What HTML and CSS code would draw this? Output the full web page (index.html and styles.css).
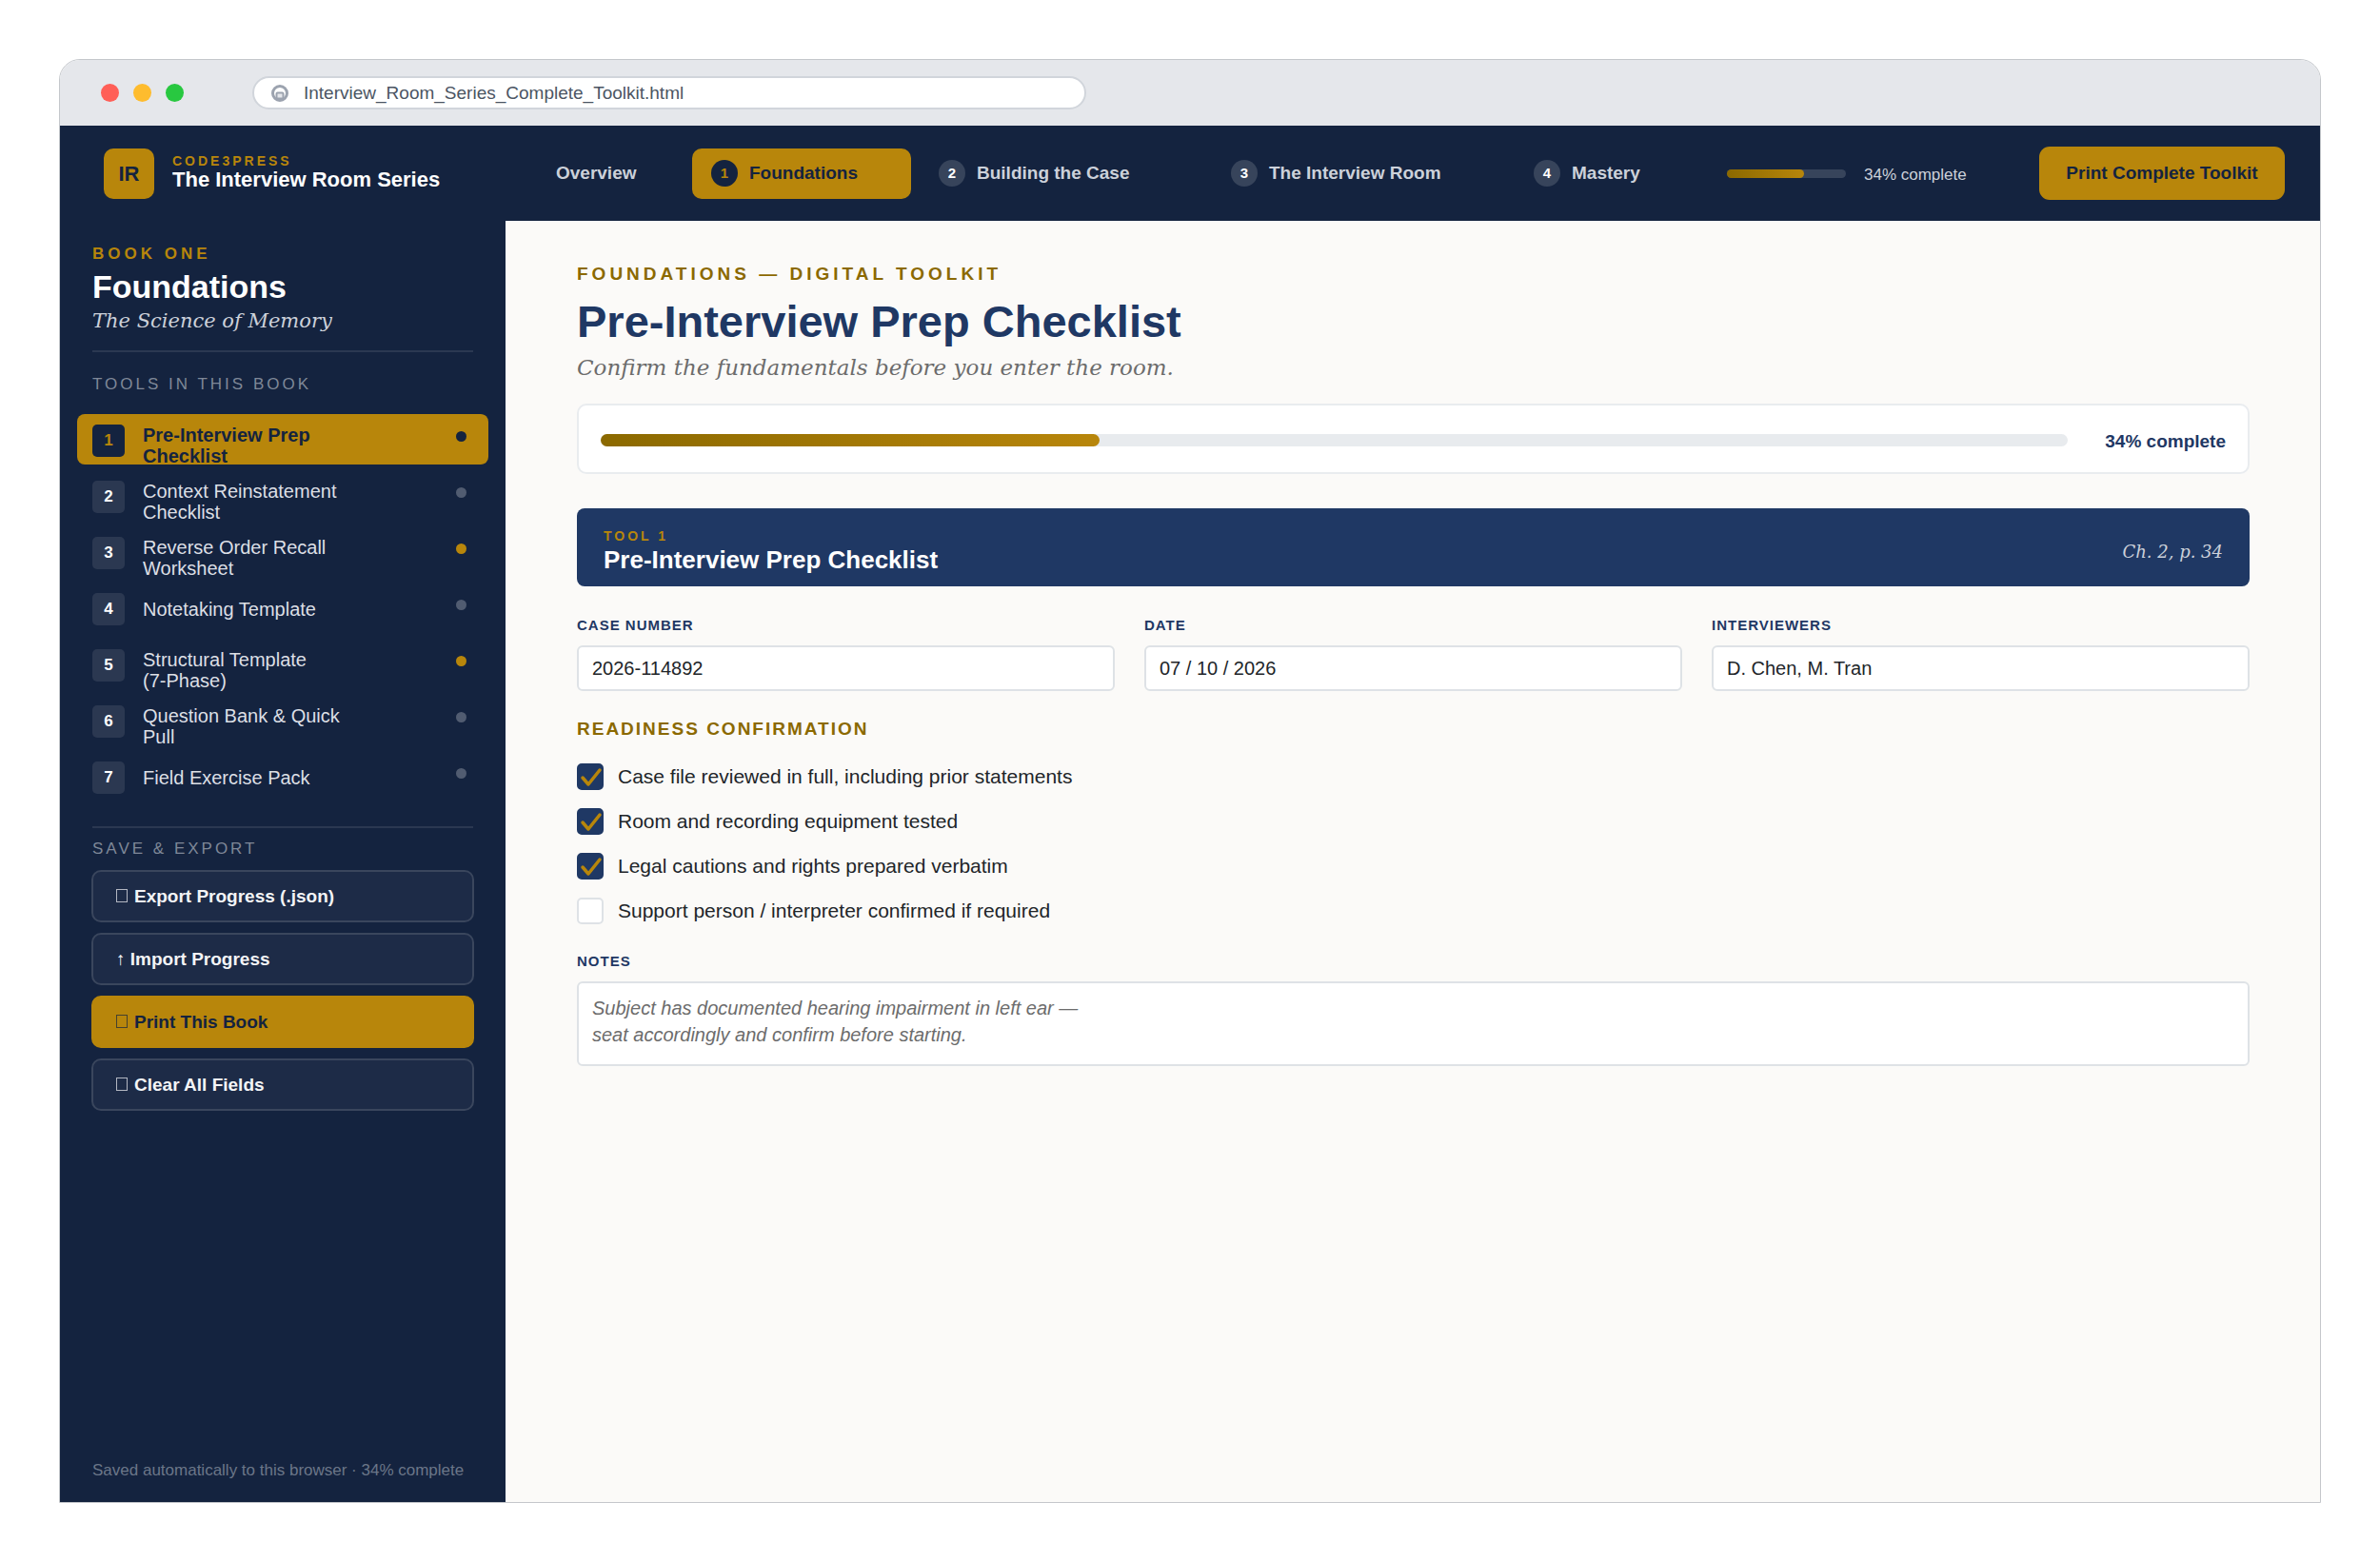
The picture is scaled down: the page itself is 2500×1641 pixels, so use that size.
FILE: index.html
```html
<!DOCTYPE html>
<html lang="en">
<head>
  <meta charset="UTF-8">
  <meta name="viewport" content="width=device-width, initial-scale=1.0">
  <title>The Interview Room Series</title>
  <link rel="stylesheet" href="styles.css">
</head>
<body>
  <div class="window">
    <div class="chrome">
      <span class="light light-red"></span>
      <span class="light light-yellow"></span>
      <span class="light light-green"></span>
      <div class="address">
        <svg class="address-icon" viewBox="0 0 20 20" fill="none" stroke="#9ca3af">
          <circle cx="10" cy="10" r="7.500" stroke-width="3"/>
          <rect x="6.500" y="9.500" width="7" height="6" rx="1" stroke-width="2" fill="#e5e7eb"/>
        </svg>
        <span>Interview_Room_Series_Complete_Toolkit.html</span>
      </div>
    </div>

    <header class="topbar">
      <div class="logo">IR</div>
      <div class="brand">
        <div class="brand-press">CODE3PRESS</div>
        <div class="brand-name">The Interview Room Series</div>
      </div>
      <nav class="books">
        <a href="#" class="book book-overview">Overview</a>
        <a href="#" class="book book-one active"><span class="book-num">1</span>Foundations</a>
        <a href="#" class="book book-two"><span class="book-num">2</span>Building the Case</a>
        <a href="#" class="book book-three"><span class="book-num">3</span>The Interview Room</a>
        <a href="#" class="book book-four"><span class="book-num">4</span>Mastery</a>
      </nav>
      <div class="mini-track"><div class="mini-fill"></div></div>
      <span class="mini-label">34% complete</span>
      <button type="button" class="print-all">Print Complete Toolkit</button>
    </header>

    <div class="layout">
      <aside class="sidebar">
        <div class="side-eyebrow">BOOK ONE</div>
        <h2 class="side-title">Foundations</h2>
        <p class="side-subtitle">The Science of Memory</p>
        <hr class="divider">
        <h3 class="side-heading">TOOLS IN THIS BOOK</h3>
        <ul class="tools">
          <li><a href="#" class="tool active"><span class="tool-num">1</span><span class="tool-name">Pre-Interview Prep<br>Checklist</span><span class="dot"></span></a></li>
          <li><a href="#" class="tool"><span class="tool-num">2</span><span class="tool-name">Context Reinstatement<br>Checklist</span><span class="dot"></span></a></li>
          <li><a href="#" class="tool"><span class="tool-num">3</span><span class="tool-name">Reverse Order Recall<br>Worksheet</span><span class="dot started"></span></a></li>
          <li><a href="#" class="tool"><span class="tool-num">4</span><span class="tool-name">Notetaking Template</span><span class="dot"></span></a></li>
          <li><a href="#" class="tool"><span class="tool-num">5</span><span class="tool-name">Structural Template<br>(7-Phase)</span><span class="dot started"></span></a></li>
          <li><a href="#" class="tool"><span class="tool-num">6</span><span class="tool-name">Question Bank &amp; Quick<br>Pull</span><span class="dot"></span></a></li>
          <li><a href="#" class="tool"><span class="tool-num">7</span><span class="tool-name">Field Exercise Pack</span><span class="dot"></span></a></li>
        </ul>
        <hr class="divider">
        <h3 class="side-heading side-heading-export">SAVE &amp; EXPORT</h3>
        <div class="actions">
          <button type="button" class="action"><span class="box-icon"></span>Export Progress (.json)</button>
          <button type="button" class="action"><span class="arrow-icon">↑</span> Import Progress</button>
          <button type="button" class="action action-primary"><span class="box-icon"></span>Print This Book</button>
          <button type="button" class="action"><span class="box-icon"></span>Clear All Fields</button>
        </div>
        <p class="saved">Saved automatically to this browser · 34% complete</p>
      </aside>

      <main class="content">
        <div class="eyebrow">FOUNDATIONS — DIGITAL TOOLKIT</div>
        <h1 class="title">Pre-Interview Prep Checklist</h1>
        <p class="subtitle">Confirm the fundamentals before you enter the room.</p>

        <div class="progress-card">
          <div class="track"><div class="fill"></div></div>
          <span class="progress-label">34% complete</span>
        </div>

        <div class="tool-header">
          <div>
            <div class="tool-header-num">TOOL 1</div>
            <h2 class="tool-header-title">Pre-Interview Prep Checklist</h2>
          </div>
          <span class="tool-ref">Ch. 2, p. 34</span>
        </div>

        <form>
          <div class="fields">
            <div class="field">
              <label for="case-number">CASE NUMBER</label>
              <input type="text" id="case-number" value="2026-114892">
            </div>
            <div class="field">
              <label for="date">DATE</label>
              <input type="text" id="date" value="07 / 10 / 2026">
            </div>
            <div class="field">
              <label for="interviewers">INTERVIEWERS</label>
              <input type="text" id="interviewers" value="D. Chen, M. Tran">
            </div>
          </div>

          <h3 class="section-heading">READINESS CONFIRMATION</h3>
          <div class="checks">
            <label class="check"><input type="checkbox" checked>Case file reviewed in full, including prior statements</label>
            <label class="check"><input type="checkbox" checked>Room and recording equipment tested</label>
            <label class="check"><input type="checkbox" checked>Legal cautions and rights prepared verbatim</label>
            <label class="check"><input type="checkbox">Support person / interpreter confirmed if required</label>
          </div>

          <div class="field">
            <label for="notes">NOTES</label>
            <textarea id="notes">Subject has documented hearing impairment in left ear —
seat accordingly and confirm before starting.</textarea>
          </div>
        </form>
      </main>
    </div>
  </div>
</body>
</html>
```
FILE: styles.css
```css
* {
  margin: 0;
  padding: 0;
  box-sizing: border-box;
}
:root {
  --navy: #1f3864;
  --navy-dark: #14233f;
  --gold: #b8860b;
  --gold-dark: #8b6900;
}
body {
  padding: 62px;
  background: #fff;
  font-family: "Liberation Sans", Arial, sans-serif;
  font-size: 20px;
  color: #212529;
}
a {
  color: inherit;
  text-decoration: none;
}
button, input, textarea {
  font-family: inherit;
}

/* Browser window */
.window {
  display: flex;
  flex-direction: column;
  min-height: calc(100vh - 124px);
  border: 1px solid #c4c7cb;
  border-radius: 22px 22px 0 0;
  overflow: hidden;
}
.chrome {
  display: flex;
  align-items: center;
  gap: 15px;
  height: 69px;
  padding-left: 43px;
  background: #e5e7eb;
}
.light {
  width: 19px;
  height: 19px;
  border-radius: 50%;
}
.light-red { background: #ff5f57; }
.light-yellow { background: #febc2e; }
.light-green { background: #28c840; }
.address {
  display: flex;
  align-items: center;
  gap: 15px;
  width: 876px;
  height: 35px;
  margin-left: 57px;
  padding-left: 17px;
  border: 2px solid #d1d5db;
  border-radius: 18px;
  background: #fff;
  font-size: 19px;
  color: #4b5563;
}
.address-icon {
  width: 20px;
  height: 20px;
}

/* Top bar */
.topbar {
  display: flex;
  align-items: center;
  height: 100px;
  padding: 0 37px 0 46px;
  background: var(--navy-dark);
  color: #fff;
  white-space: nowrap;
}
.logo {
  width: 53px;
  height: 53px;
  border-radius: 10px;
  background: var(--gold);
  color: var(--navy-dark);
  font-size: 22px;
  font-weight: bold;
  line-height: 53px;
  text-align: center;
}
.brand {
  width: 383px;
  margin-left: 19px;
  padding-bottom: 2px;
  font-weight: bold;
}
.brand-press {
  font-size: 14px;
  line-height: 16px;
  letter-spacing: 3px;
  color: var(--gold);
}
.brand-name {
  font-size: 22px;
  line-height: 24px;
}
.books {
  display: flex;
  gap: 9px;
}
.book {
  display: flex;
  align-items: center;
  gap: 12px;
  height: 53px;
  padding-left: 20px;
  border-radius: 10px;
  font-size: 19px;
  font-weight: bold;
  color: #ccd1da;
}
.book-overview { width: 154px; }
.book-one { width: 230px; }
.book-two { width: 298px; }
.book-three { width: 309px; }
.book-four { width: 223px; }
.book-num {
  width: 28px;
  height: 28px;
  border-radius: 50%;
  background: #37445b;
  color: #fff;
  font-size: 15px;
  line-height: 28px;
  text-align: center;
}
.book.active {
  background: var(--gold);
  color: var(--navy-dark);
}
.book.active .book-num {
  background: var(--navy-dark);
  color: var(--gold);
}
.mini-track {
  width: 125px;
  height: 9px;
  border-radius: 5px;
  background: #37445b;
}
.mini-fill {
  width: 65%;
  height: 100%;
  border-radius: 5px;
  background: linear-gradient(90deg, var(--gold-dark), var(--gold));
}
.mini-label {
  margin-left: 19px;
  padding-top: 3px;
  font-size: 17px;
  color: #ccd1da;
}
.print-all {
  width: 258px;
  height: 56px;
  margin-left: auto;
  border: none;
  border-radius: 11px;
  background: var(--gold);
  color: var(--navy-dark);
  font-size: 19px;
  font-weight: bold;
}

/* Sidebar */
.layout {
  display: flex;
  flex: 1;
}
.sidebar {
  display: flex;
  flex-direction: column;
  width: 468px;
  padding: 25px 34px 23px;
  background: var(--navy-dark);
  color: #fff;
}
.side-eyebrow {
  font-size: 17px;
  font-weight: bold;
  line-height: 20px;
  letter-spacing: 4px;
  color: var(--gold);
}
.side-title {
  margin-top: 4px;
  font-size: 34px;
  line-height: 40px;
}
.side-subtitle {
  margin-top: 2px;
  font-family: "DejaVu Serif", serif;
  font-size: 21px;
  font-style: italic;
  line-height: 28px;
  color: #ccd1da;
}
.divider {
  height: 2px;
  margin-top: 17px;
  border: none;
  background: #2b3851;
}
.side-heading {
  margin-top: 24px;
  font-size: 17px;
  font-weight: normal;
  line-height: 20px;
  letter-spacing: 3px;
  color: #7f8898;
}
.side-heading-export {
  margin-top: 12px;
}
.tools {
  display: grid;
  grid-auto-rows: 53px;
  gap: 6px;
  margin: 21px -16px 9px;
  list-style: none;
}
.tool {
  display: flex;
  align-items: flex-start;
  height: 53px;
  padding: 11px 23px 0 16px;
  border-radius: 8px;
  color: #dcdfe5;
}
.tool-num {
  width: 34px;
  height: 34px;
  border-radius: 5px;
  background: #2b3851;
  color: #fff;
  font-size: 17px;
  font-weight: bold;
  line-height: 34px;
  text-align: center;
}
.tool-name {
  display: flex;
  flex: 1;
  flex-direction: column;
  justify-content: center;
  min-height: 34px;
  margin-left: 19px;
  line-height: 22px;
}
.dot {
  width: 11px;
  height: 11px;
  margin-top: 7px;
  border-radius: 50%;
  background: #515c71;
}
.dot.started {
  background: var(--gold);
}
.tool.active {
  background: var(--gold);
  color: var(--navy-dark);
  font-weight: bold;
}
.tool.active .tool-num {
  background: var(--navy-dark);
  color: var(--gold);
}
.tool.active .dot {
  background: var(--navy-dark);
}
.actions {
  display: grid;
  gap: 11px;
  margin: 12px -1px 0;
}
.action {
  height: 55px;
  padding-left: 24px;
  border: 2px solid #3a465d;
  border-radius: 10px;
  background: #1d2b47;
  color: #f3f4f6;
  font-size: 19px;
  font-weight: bold;
  text-align: left;
}
.action-primary {
  border-color: var(--gold);
  background: var(--gold);
  color: var(--navy-dark);
}
.box-icon {
  display: inline-block;
  width: 12px;
  height: 14px;
  margin-right: 7px;
  border: 1px solid;
  opacity: 0.7;
}
.arrow-icon {
  font-weight: normal;
}
.saved {
  margin-top: auto;
  font-size: 17px;
  line-height: 20px;
  color: #6b7688;
}

/* Main content */
.content {
  flex: 1;
  padding: 44px 74px 44px 75px;
  background: #fbfaf8;
}
.eyebrow {
  font-size: 19px;
  font-weight: bold;
  line-height: 24px;
  letter-spacing: 4px;
  color: var(--gold-dark);
}
.title {
  margin-top: 10px;
  font-size: 47px;
  line-height: 56px;
  color: var(--navy);
}
.subtitle {
  margin-top: 5px;
  font-family: "DejaVu Serif", serif;
  font-size: 23px;
  font-style: italic;
  line-height: 30px;
  color: #6c6c6c;
}
.progress-card {
  display: flex;
  align-items: center;
  gap: 39px;
  height: 74px;
  margin-top: 23px;
  padding: 2px 23px 0;
  border: 2px solid #e9ecef;
  border-radius: 10px;
  background: #fff;
}
.track {
  flex: 1;
  height: 13px;
  border-radius: 7px;
  background: #e8ebee;
}
.fill {
  width: 34%;
  height: 100%;
  border-radius: 7px;
  background: linear-gradient(90deg, var(--gold-dark), var(--gold));
}
.progress-label {
  padding-top: 3px;
  font-size: 19px;
  font-weight: bold;
  color: var(--navy);
}
.tool-header {
  display: flex;
  align-items: center;
  justify-content: space-between;
  height: 82px;
  margin-top: 36px;
  padding: 8px 28px 0;
  border-radius: 8px;
  background: var(--navy);
  color: #fff;
}
.tool-header-num {
  font-size: 14px;
  font-weight: bold;
  line-height: 18px;
  letter-spacing: 3px;
  color: var(--gold);
}
.tool-header-title {
  font-size: 26px;
  line-height: 32px;
}
.tool-ref {
  font-family: "DejaVu Serif", serif;
  font-size: 18px;
  font-style: italic;
  color: #ccd1da;
}
.fields {
  display: grid;
  grid-template-columns: repeat(3, 1fr);
  gap: 31px;
  margin-top: 32px;
}
.field {
  display: flex;
  flex-direction: column;
  gap: 12px;
}
.field label {
  font-size: 15px;
  font-weight: bold;
  line-height: 18px;
  letter-spacing: 1px;
  color: var(--navy);
}
.field input, .field textarea {
  width: 100%;
  height: 48px;
  padding: 0 14px;
  border: 2px solid #dee2e6;
  border-radius: 6px;
  background: #fff;
  color: #212529;
  font-size: 20px;
}
.field textarea {
  height: 89px;
  padding: 12px 14px;
  color: #6c6c6c;
  font-style: italic;
  line-height: 28px;
  resize: none;
}
.section-heading {
  margin-top: 28px;
  font-size: 19px;
  line-height: 24px;
  letter-spacing: 2px;
  color: var(--gold-dark);
}
.checks {
  display: grid;
  gap: 19px;
  margin: 24px 0 30px;
}
.check {
  display: flex;
  align-items: center;
  gap: 15px;
  font-size: 21px;
  line-height: 28px;
}
.check input {
  width: 28px;
  height: 28px;
  appearance: none;
  border: 2px solid #dee2e6;
  border-radius: 5px;
  background: #fff;
}
.check input:checked {
  border-color: var(--navy);
  background: var(--navy) url("data:image/svg+xml,%3Csvg xmlns='http://www.w3.org/2000/svg' viewBox='0 0 28 28' fill='none' stroke='%23b8860b' stroke-width='3.500' stroke-linecap='round' stroke-linejoin='round'%3E%3Cpath d='M6 15l6 7L24 7'/%3E%3C/svg%3E") center / 28px no-repeat border-box;
}
```
